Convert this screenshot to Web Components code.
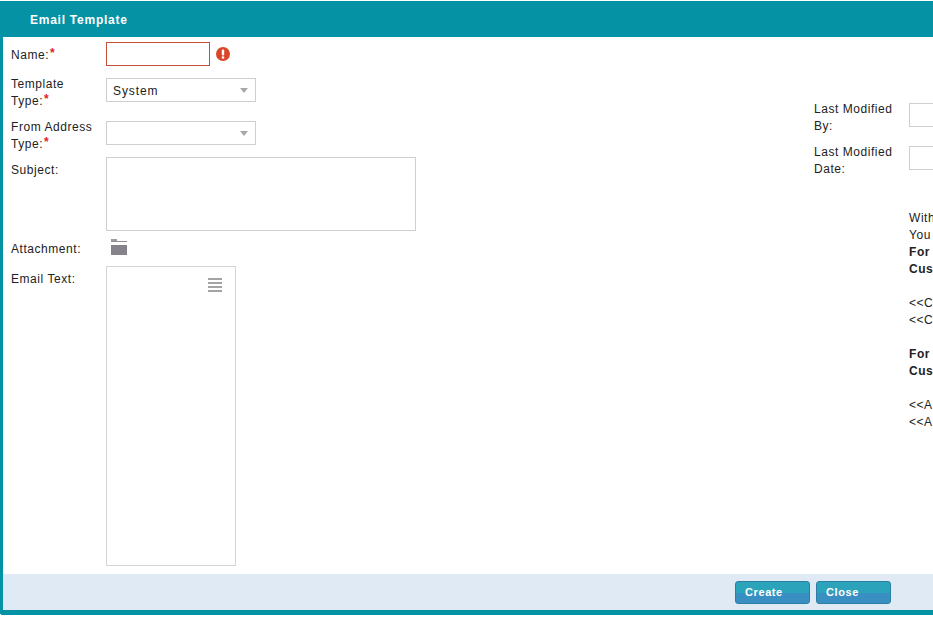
<!DOCTYPE html>
<html>
<head>
<meta charset="utf-8">
<title>Email Template</title>
<style>
    html, body {
        margin: 0;
        height: 100%;
        overflow: hidden;
        background: #fff;
        font: 12px/17px "Liberation Sans", Arial, sans-serif;
        letter-spacing: 0.55px;
        color: #222;
    }
    x-field.name { margin-top: 5px; }
    x-field.type { margin-top: 12px; }
    x-field.from { margin-top: 11px; }
    x-field.subject { margin-top: 4px; }
    x-field.attach { margin-top: 8px; }
    x-field.text { margin-top: 8px; }
    x-field.by { margin-top: 66px; }
    x-field.date { margin-top: 11px; }
    x-notes { margin-top: 32px; margin-left: 95px; }
</style>
</head>
<body>
<x-window heading="Email Template">
    <div slot="left">
        <x-field class="name" label="Name:" required>
            <x-input width="104" height="24" invalid></x-input>
            <x-error-icon></x-error-icon>
        </x-field>
        <x-field class="type" label="Template|Type:" required two-line>
            <x-select value="System"></x-select>
        </x-field>
        <x-field class="from" label="From Address|Type:" required two-line>
            <x-select></x-select>
        </x-field>
        <x-field class="subject" label="Subject:">
            <x-input width="310" height="74"></x-input>
        </x-field>
        <x-field class="attach" label="Attachment:" flush>
            <x-folder-icon></x-folder-icon>
        </x-field>
        <x-field class="text" label="Email Text:">
            <x-editor></x-editor>
        </x-field>
    </div>
    <div slot="right">
        <x-field class="by" label="Last Modified|By:" two-line>
            <x-input width="60" height="24"></x-input>
        </x-field>
        <x-field class="date" label="Last Modified|Date:" two-line>
            <x-input width="60" height="24"></x-input>
        </x-field>
        <x-notes>
            <div>With</div>
            <div>You</div>
            <b>For</b>
            <b>Cus</b>
            <br>
            <div>&lt;&lt;C</div>
            <div>&lt;&lt;C</div>
            <br>
            <b>For</b>
            <b>Cus</b>
            <br>
            <div>&lt;&lt;A</div>
            <div>&lt;&lt;A</div>
        </x-notes>
    </div>
    <x-button slot="footer">Create</x-button>
    <x-button slot="footer">Close</x-button>
</x-window>

<script>
class XWindow extends HTMLElement {
    constructor() {
        super();
        this.attachShadow({mode: "open"});
    }
    connectedCallback() {
        this.shadowRoot.innerHTML = `
            <style>
                :host {
                    display: flex;
                    flex-direction: column;
                    box-sizing: border-box;
                    width: 1040px;
                    height: 614px;
                    margin-top: 1px;
                    background: #fff;
                    border: solid #0592a5;
                    border-width: 0 3px 5px 3px;
                    border-radius: 0 0 3px 3px;
                }
                .head {
                    height: 36px;
                    padding-left: 27px;
                    background: #0592a5;
                    color: #fff;
                    font-weight: bold;
                    font-size: 12px;
                    letter-spacing: 0.75px;
                    line-height: 38px;
                }
                .body {
                    flex: 1;
                    display: flex;
                    min-height: 0;
                }
                .left { width: 803px; padding-left: 8px; }
                .right { flex: 1; }
                .foot {
                    height: 36px;
                    display: flex;
                    gap: 6px;
                    justify-content: flex-end;
                    align-items: flex-start;
                    box-sizing: border-box;
                    padding: 7px 146px 0 0;
                    background: #dfeaf5;
                }
            </style>
            <div class="head">${this.getAttribute("heading")}</div>
            <div class="body">
                <div class="left"><slot name="left"></slot></div>
                <div class="right"><slot name="right"></slot></div>
            </div>
            <div class="foot"><slot name="footer"></slot></div>`;
    }
}

class XField extends HTMLElement {
    constructor() {
        super();
        this.attachShadow({mode: "open"});
    }
    connectedCallback() {
        const lines = this.getAttribute("label").split("|");
        const star = this.hasAttribute("required") ? `<span class="star">*</span>` : "";
        const label = lines.map((line, i) => {
            return `<div class="line">${line}${i == lines.length - 1 ? star : ""}</div>`;
        }).join("");
        this.shadowRoot.innerHTML = `
            <style>
                :host {
                    display: flex;
                    align-items: flex-start;
                }
                .label {
                    box-sizing: border-box;
                    width: 95px;
                    padding-right: 2px;
                    margin-top: 5px;
                }
                :host([two-line]) .label { margin-top: -2px; }
                :host([flush]) .label { margin-top: 2px; }
                .star {
                    color: #e0202a;
                    font-size: 12px;
                    font-weight: bold;
                    line-height: 10px;
                    position: relative;
                    top: -2px;
                    margin-left: 1px;
                    letter-spacing: 0;
                }
                .control {
                    display: flex;
                    align-items: center;
                    gap: 6px;
                }
            </style>
            <div class="label">${label}</div>
            <div class="control"><slot></slot></div>`;
    }
}

class XInput extends HTMLElement {
    constructor() {
        super();
        this.attachShadow({mode: "open"});
    }
    connectedCallback() {
        this.shadowRoot.innerHTML = `
            <style>
                :host {
                    display: block;
                    box-sizing: border-box;
                    width: ${this.getAttribute("width")}px;
                    height: ${this.getAttribute("height")}px;
                    border: 1px solid #cfcfcf;
                    background: #fff;
                }
                :host([invalid]) { border-color: #c0503c; }
            </style>`;
    }
}

class XSelect extends HTMLElement {
    constructor() {
        super();
        this.attachShadow({mode: "open"});
    }
    connectedCallback() {
        this.shadowRoot.innerHTML = `
            <style>
                :host {
                    display: flex;
                    align-items: center;
                    justify-content: space-between;
                    box-sizing: border-box;
                    width: 150px;
                    height: 24px;
                    padding: 0 7px 0 6px;
                    border: 1px solid #cfcfcf;
                    background: #fff;
                    letter-spacing: 0.9px;
                }
                .value { position: relative; top: 1px; }
                .arrow {
                    width: 0;
                    height: 0;
                    border: 4.5px solid transparent;
                    border-top: 5px solid #a8a8a8;
                    border-bottom: 0;
                }
            </style>
            <span class="value">${this.getAttribute("value") || ""}</span>
            <span class="arrow"></span>`;
    }
}

class XEditor extends HTMLElement {
    constructor() {
        super();
        this.attachShadow({mode: "open"});
    }
    connectedCallback() {
        this.shadowRoot.innerHTML = `
            <style>
                :host {
                    display: flex;
                    justify-content: flex-end;
                    box-sizing: border-box;
                    width: 130px;
                    height: 300px;
                    padding: 11px 13px 0 0;
                    border: 1px solid #d4d4d4;
                }
                svg { display: block; }
            </style>
            <svg width="14" height="15" viewBox="0 0 14 15" fill="#a3a3a3">
                <rect y="0" width="14" height="2"></rect>
                <rect y="4" width="14" height="2"></rect>
                <rect y="8" width="14" height="2"></rect>
                <rect y="12" width="14" height="2"></rect>
            </svg>`;
    }
}

class XErrorIcon extends HTMLElement {
    constructor() {
        super();
        this.attachShadow({mode: "open"});
    }
    connectedCallback() {
        this.shadowRoot.innerHTML = `
            <style>
                :host { display: block; }
                svg { display: block; }
            </style>
            <svg width="14" height="14" viewBox="0 0 14 14">
                <circle cx="7" cy="7" r="7" fill="#d9472b"></circle>
                <rect x="5.8" y="2.6" width="2.4" height="5.8" rx="1" fill="#fff"></rect>
                <rect x="5.8" y="9.4" width="2.4" height="2.2" fill="#fff"></rect>
            </svg>`;
    }
}

class XFolderIcon extends HTMLElement {
    constructor() {
        super();
        this.attachShadow({mode: "open"});
    }
    connectedCallback() {
        this.shadowRoot.innerHTML = `
            <style>
                :host { display: block; padding-left: 5px; }
                svg { display: block; }
            </style>
            <svg width="16" height="16" viewBox="0 0 16 16" fill="#86848a">
                <rect x="0" y="0" width="6" height="3" fill="#9d9ba0"></rect>
                <rect x="0" y="2" width="16" height="1" fill="#8f8d92"></rect>
                <rect x="0" y="6" width="16" height="10"></rect>
            </svg>`;
    }
}

class XNotes extends HTMLElement {
    constructor() {
        super();
        this.attachShadow({mode: "open"});
    }
    connectedCallback() {
        this.shadowRoot.innerHTML = `
            <style>
                :host { display: block; white-space: nowrap; }
                ::slotted(b) { display: block; }
            </style>
            <slot></slot>`;
    }
}

class XButton extends HTMLElement {
    constructor() {
        super();
        this.attachShadow({mode: "open"});
    }
    connectedCallback() {
        this.shadowRoot.innerHTML = `
            <style>
                :host {
                    display: block;
                    box-sizing: border-box;
                    width: 75px;
                    height: 23px;
                    padding-left: 9px;
                    border: 1px solid #2a7fa3;
                    border-radius: 3px;
                    background: linear-gradient(#2ba3bb 0 50%, #3a8fc2 50% 100%);
                    color: #fff;
                    font-weight: bold;
                    font-size: 11px;
                    letter-spacing: 0.6px;
                    line-height: 21px;
                }
            </style>
            <slot></slot>`;
    }
}

customElements.define("x-window", XWindow);
customElements.define("x-field", XField);
customElements.define("x-input", XInput);
customElements.define("x-select", XSelect);
customElements.define("x-editor", XEditor);
customElements.define("x-error-icon", XErrorIcon);
customElements.define("x-folder-icon", XFolderIcon);
customElements.define("x-notes", XNotes);
customElements.define("x-button", XButton);
</script>
</body>
</html>
